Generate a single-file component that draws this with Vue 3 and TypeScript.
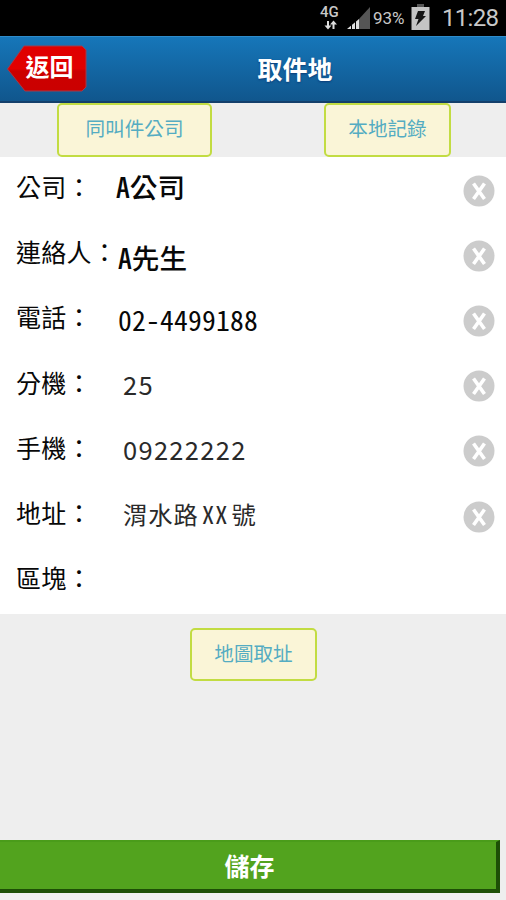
<script setup lang="ts">
interface Field {
  label: string
  value: string
  kind: string
  clearable: boolean
}

const fields: Field[] = [
  { label: '公司：', value: 'A公司', kind: 'company', clearable: true },
  { label: '連絡人：', value: 'A先生', kind: 'contact', clearable: true },
  { label: '電話：', value: '02-4499188', kind: 'phone', clearable: true },
  { label: '分機：', value: '25', kind: 'number', clearable: true },
  { label: '手機：', value: '09222222', kind: 'number', clearable: true },
  { label: '地址：', value: '渭水路 XX 號', kind: 'address', clearable: true },
  { label: '區塊：', value: '', kind: 'number', clearable: false },
]
</script>

<template>
  <div class="screen">
    <div class="status">
      <div class="network">
        <span class="network-text">4G</span>
        <svg class="arrows" width="14" height="10" viewBox="0 0 14 10">
          <path d="M4 1v6M9.500 9v-6" stroke="#ddd" stroke-width="2" />
          <path d="M0.500 5.500h7L4 9.500zM6 4.500h7L9.500 0.500z" fill="#ddd" />
        </svg>
      </div>
      <svg class="signal" width="24" height="24" viewBox="0 0 24 24">
        <path d="M0 23L12 13V23z" fill="#ddd" />
        <path d="M12 13L23 1V23H12z" fill="#555" />
        <path d="M4.500 16V24M8.500 14V24" stroke="#000" stroke-width="1" />
      </svg>
      <span class="percent">93%</span>
      <svg class="battery" width="19" height="27" viewBox="0 0 19 27">
        <rect x="6" y="0" width="7" height="4" fill="#555" />
        <rect x="0.500" y="3" width="18" height="23" fill="#c4c4c4" />
        <path d="M7 7h7l-2 5h3L5 22l2.500-7H4z" fill="#151515" />
      </svg>
      <span class="clock">11:28</span>
    </div>

    <header class="header">
      <button class="back">
        <svg class="back-shape" width="80" height="48" viewBox="0 0 80 48">
          <defs>
            <linearGradient id="red" x1="0" y1="0" x2="0" y2="1">
              <stop offset="0" stop-color="#df0000" />
              <stop offset="0.5" stop-color="#e20000" />
              <stop offset="0.56" stop-color="#cc0000" />
              <stop offset="1" stop-color="#cb0000" />
            </linearGradient>
          </defs>
          <path
            d="M17 1H75L79 5V42L75 46H18L0.500 24z"
            fill="url(#red)"
            stroke="#a33a4a"
            stroke-width="1"
          />
        </svg>
        <span class="back-text">返回</span>
      </button>
      <h1 class="title">取件地</h1>
    </header>

    <div class="tools">
      <button class="tool same">同叫件公司</button>
      <button class="tool local">本地記錄</button>
    </div>

    <main class="form">
      <div v-for="field in fields" :key="field.label" class="row">
        <label class="label">{{ field.label }}</label>
        <span class="value" :class="field.kind">{{ field.value }}</span>
        <svg v-if="field.clearable" class="clear" width="32" height="32" viewBox="0 0 32 32">
          <circle cx="16" cy="16" r="15.500" fill="#cccccc" />
          <path d="M10.500 8.500L21.500 24M21.500 8.500L10.500 24" stroke="#fff" stroke-width="3.600" />
        </svg>
      </div>
    </main>

    <div class="map-area">
      <button class="tool map">地圖取址</button>
    </div>

    <button class="save">儲存</button>
  </div>
</template>

<style>
body {
  margin: 0;
  background: #eeeeee;
}
</style>

<style scoped>
.screen {
  width: 506px;
  height: 900px;
  display: flex;
  flex-direction: column;
  background: #eeeeee;
  font-family: "Noto Sans CJK TC", sans-serif;
  overflow: hidden;
}
button {
  border: 0;
  padding: 0;
  margin: 0;
  font-family: inherit;
}
.status {
  height: 36px;
  flex: none;
  box-sizing: border-box;
  padding-left: 320px;
  background: #000;
  color: #c8c8c8;
  display: flex;
  font-family: Roboto, sans-serif;
  white-space: nowrap;
}
.network {
  width: 22px;
  padding-top: 4px;
  display: flex;
  flex-direction: column;
}
.network-text {
  font-size: 15px;
  font-weight: 500;
  line-height: 16px;
}
.arrows {
  margin-left: 4px;
}
.signal {
  margin: 6px 0 0 5px;
}
.percent {
  width: 37px;
  margin-left: 2px;
  font-size: 17px;
  line-height: 37px;
}
.battery {
  margin: 4px 0 0 1px;
}
.clock {
  margin-left: 12px;
  font-size: 24px;
  letter-spacing: -0.700px;
  line-height: 37px;
}
.header {
  height: 67px;
  flex: none;
  box-sizing: border-box;
  border-top: 1px solid #2f8cca;
  border-bottom: 2px solid #133f6b;
  background: linear-gradient(#1676b9, #10568d);
  display: grid;
  grid-template-columns: 134px 1fr 50px;
}
.back {
  width: 80px;
  height: 48px;
  margin: 8px 0 0 7px;
  background: none;
  display: grid;
}
.back-shape,
.back-text {
  grid-area: 1 / 1;
}
.back-text {
  z-index: 1;
  color: #fff;
  font-size: 24px;
  font-weight: 700;
  line-height: 42px;
  padding-left: 5px;
}
.title {
  margin: 0;
  text-align: center;
  color: #fff;
  font-size: 25px;
  font-weight: 700;
  line-height: 62px;
  text-shadow: 0 1px 2px #0a3c78;
}
.tools {
  height: 54px;
  flex: none;
  display: flex;
}
.tool {
  height: 54px;
  box-sizing: border-box;
  border: 2px solid #c2dc42;
  border-radius: 5px;
  background: #faf5d7;
  color: #54acc2;
  font-size: 19.600px;
  line-height: 30px;
  padding: 0 0 4px;
}
.same {
  width: 155px;
  margin-left: 57px;
}
.local {
  width: 127px;
  margin-left: 112px;
}
.form {
  height: 457px;
  flex: none;
  background: #fff;
  display: grid;
  grid-template-rows: repeat(7, 65.200px);
}
.row {
  display: flex;
  align-items: center;
  padding: 0 11px 0 16px;
}
.label {
  flex: none;
  width: 100px;
  color: #080808;
  font-size: 25px;
  letter-spacing: 0.300px;
  line-height: 36px;
  padding-bottom: 7px;
  white-space: nowrap;
}
.value {
  flex: 1;
  color: #080808;
  white-space: nowrap;
  line-height: 40px;
  padding-bottom: 4px;
}
.company,
.contact,
.phone {
  font-size: 27.600px;
  font-feature-settings: "hwid";
}
.company {
  font-weight: 500;
  padding-bottom: 7px;
}
.contact {
  padding: 4px 0 0 2px;
  font-weight: 500;
}
.phone {
  padding: 0 0 2px 2px;
  letter-spacing: 0.200px;
}
.number {
  padding-left: 7px;
  padding-bottom: 3px;
  font-size: 25.500px;
  color: #2a2a2a;
  letter-spacing: 1.300px;
}
.address {
  padding-left: 7px;
  padding-bottom: 3px;
  font-size: 24.300px;
  color: #2a2a2a;
  letter-spacing: 1px;
  word-spacing: -10px;
  font-feature-settings: "hwid";
}
.clear {
  flex: none;
  margin-top: 2px;
}
.map-area {
  flex: 1;
  padding-top: 14px;
}
.map {
  display: block;
  width: 127px;
  height: 53px;
  margin-left: 190px;
}
.save {
  width: 500px;
  height: 53px;
  flex: none;
  margin-bottom: 7px;
  box-sizing: border-box;
  border-style: solid;
  border-width: 2px 4px 4px 0;
  border-color: #4a9c1a #1d4f06 #1d4f06 #4a9c1a;
  background: #52a31e;
  color: #fff;
  font-size: 25px;
  font-weight: 700;
  padding: 0 0 2px 3px;
  line-height: 34px;
}
</style>
